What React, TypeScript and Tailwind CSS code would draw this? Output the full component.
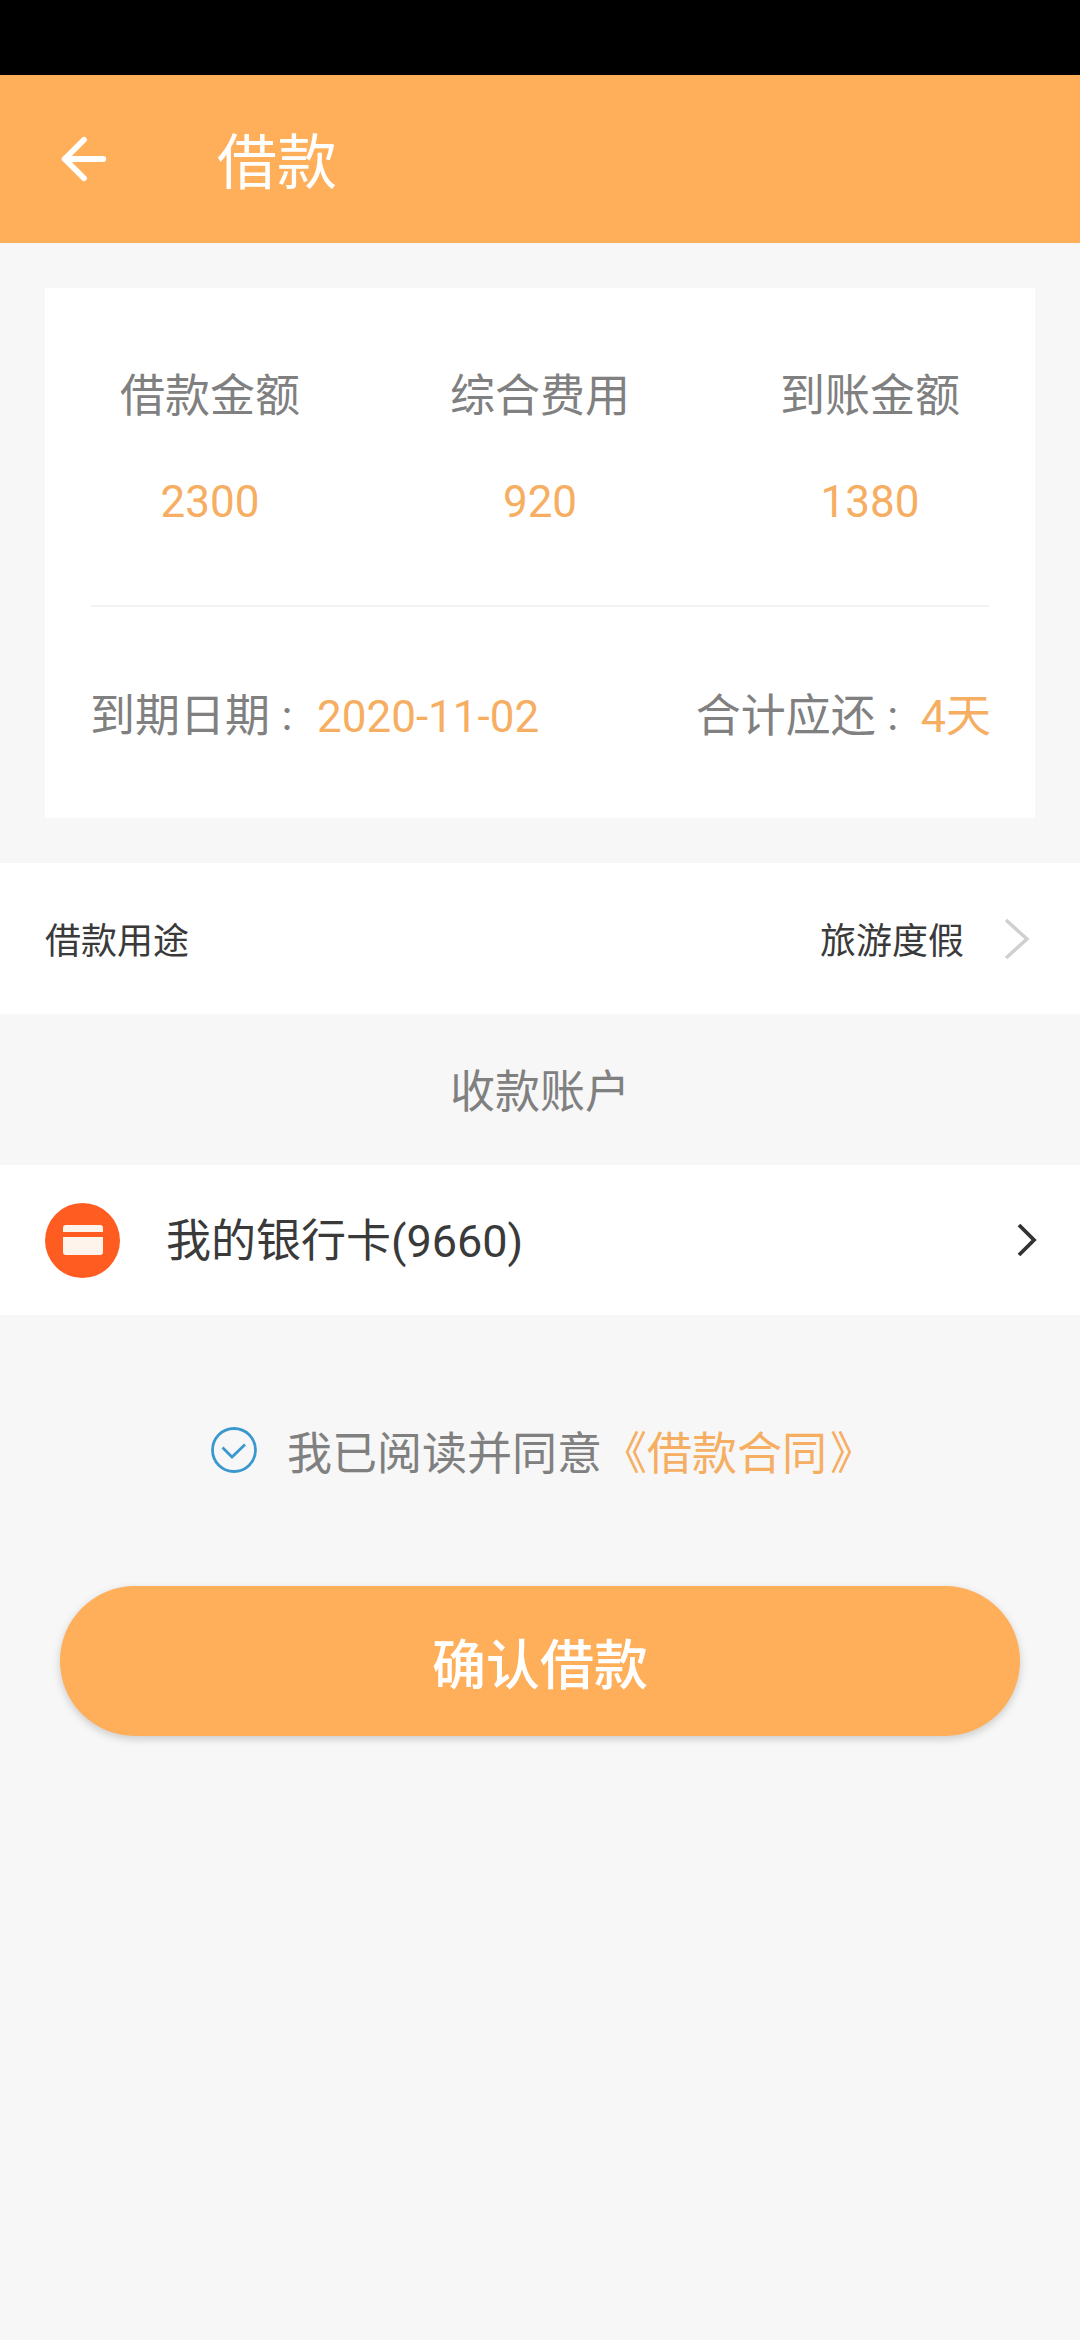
import { ArrowLeft } from "lucide-react"

const stats = [
  { label: "借款金额", value: "2300" },
  { label: "综合费用", value: "920" },
  { label: "到账金额", value: "1380" },
]

export default function App() {
  return (
    <div className="flex min-h-[2340px] w-[1080px] flex-col bg-[#f7f7f7] font-['Roboto','Noto_Sans_CJK_SC',sans-serif]">
      {/* status bar */}
      <div className="h-[75px] bg-black" />

      {/* header */}
      <header className="flex h-[168px] items-center bg-[#ffae5a] pl-[51px] text-white">
        <ArrowLeft className="h-[66px] w-[66px]" strokeWidth={2.1} />
        <h1 className="ml-[100px] pt-[10px] text-[60px] leading-none">借款</h1>
      </header>

      {/* summary card */}
      <section className="mx-[45px] mt-[45px] h-[530px] bg-white">
        <div className="grid grid-cols-3 pt-[81px]">
          {stats.map((s) => (
            <div key={s.label} className="flex flex-col items-center">
              <span className="text-[45px] leading-[56px] text-[#808080]">{s.label}</span>
              <span className="mt-[51px] text-[44px] leading-[52px] text-[#f6ae63]">{s.value}</span>
            </div>
          ))}
        </div>
        <div className="mx-[46px] mt-[77px] h-[2px] bg-[#f3f3f3]" />
        <div className="ml-[45px] mr-[44px] mt-[82px] flex items-center justify-between text-[44px] leading-[56px]">
          <div>
            <span className="text-[45px] text-[#808080]">
              到期日期<span className="mr-[13px] font-['Noto_Sans_CJK_TC'] text-[34px] leading-none">：</span>
            </span>
            <span className="text-[#f6ae63]">2020-11-02</span>
          </div>
          <div>
            <span className="text-[45px] text-[#808080]">
              合计应还<span className="mr-[11px] font-['Noto_Sans_CJK_TC'] text-[34px] leading-none">：</span>
            </span>
            <span className="text-[45px] text-[#f6ae63]">4天</span>
          </div>
        </div>
      </section>

      {/* purpose */}
      <div className="mt-[45px] flex h-[151px] items-center justify-between bg-white px-[45px]">
        <span className="pt-[6px] text-[36px] text-[#3a3a3a]">借款用途</span>
        <div className="flex items-center">
          <span className="pt-[6px] text-[36px] text-[#3a3a3a]">旅游度假</span>
          <svg className="ml-[40px] mr-[5px] h-[42px] w-[26px]" viewBox="0 0 26 42" fill="none">
            <path d="M2 2 L23 21 L2 40" stroke="#d0d0d0" strokeWidth="3.5" />
          </svg>
        </div>
      </div>

      <div className="flex h-[151px] items-center justify-center pt-[6px] text-[45px] text-[#808080]">收款账户</div>

      {/* bank card */}
      <div className="flex h-[150px] items-center bg-white pl-[45px] pr-[43px]">
        <div className="flex h-[75px] w-[75px] items-center justify-center rounded-full bg-[#ff5c21]">
          <div className="flex h-[30px] w-[40px] flex-col rounded-[3px] bg-[#fff4ec]">
            <div className="mt-[7px] h-[5px] bg-[#ff5c21]" />
          </div>
        </div>
        <span className="ml-[46px] pt-[4px] text-[45px] text-[#3a3a3a]">我的银行卡(9660)</span>
        <svg className="ml-auto h-[34px] w-[20px]" viewBox="0 0 20 34" fill="none">
          <path d="M2 2 L17 17 L2 32" stroke="#333333" strokeWidth="3.8" />
        </svg>
      </div>

      {/* agreement */}
      <div className="mt-[102px] flex items-center justify-center pl-[6px] text-[45px] leading-[56px]">
        <svg className="h-[46px] w-[46px]" viewBox="0 0 46 46" fill="none">
          <circle cx="23" cy="23" r="21.5" stroke="#3a98cf" strokeWidth="2.8" />
          <path d="M11.5 20.5 L21 30 L34 17.5" stroke="#3a98cf" strokeWidth="2.8" />
        </svg>
        <span className="ml-[30px] pt-[10px] text-[#808080]">我已阅读并同意</span>
        <span className="pt-[10px] text-[#f6ae63]">
          <span className="font-['Noto_Sans_CJK_TC'] leading-none">《</span>借款合同<span className="ml-[3px] font-['Noto_Sans_CJK_TC'] leading-none">》</span>
        </span>
      </div>

      {/* submit */}
      <button className="mx-[60px] mt-[103px] h-[150px] rounded-full bg-[#ffae5a] pt-[10px] text-[54px] font-medium text-white shadow-[0_3px_8px_rgba(0,0,0,0.18)]">
        确认借款
      </button>
    </div>
  )
}
